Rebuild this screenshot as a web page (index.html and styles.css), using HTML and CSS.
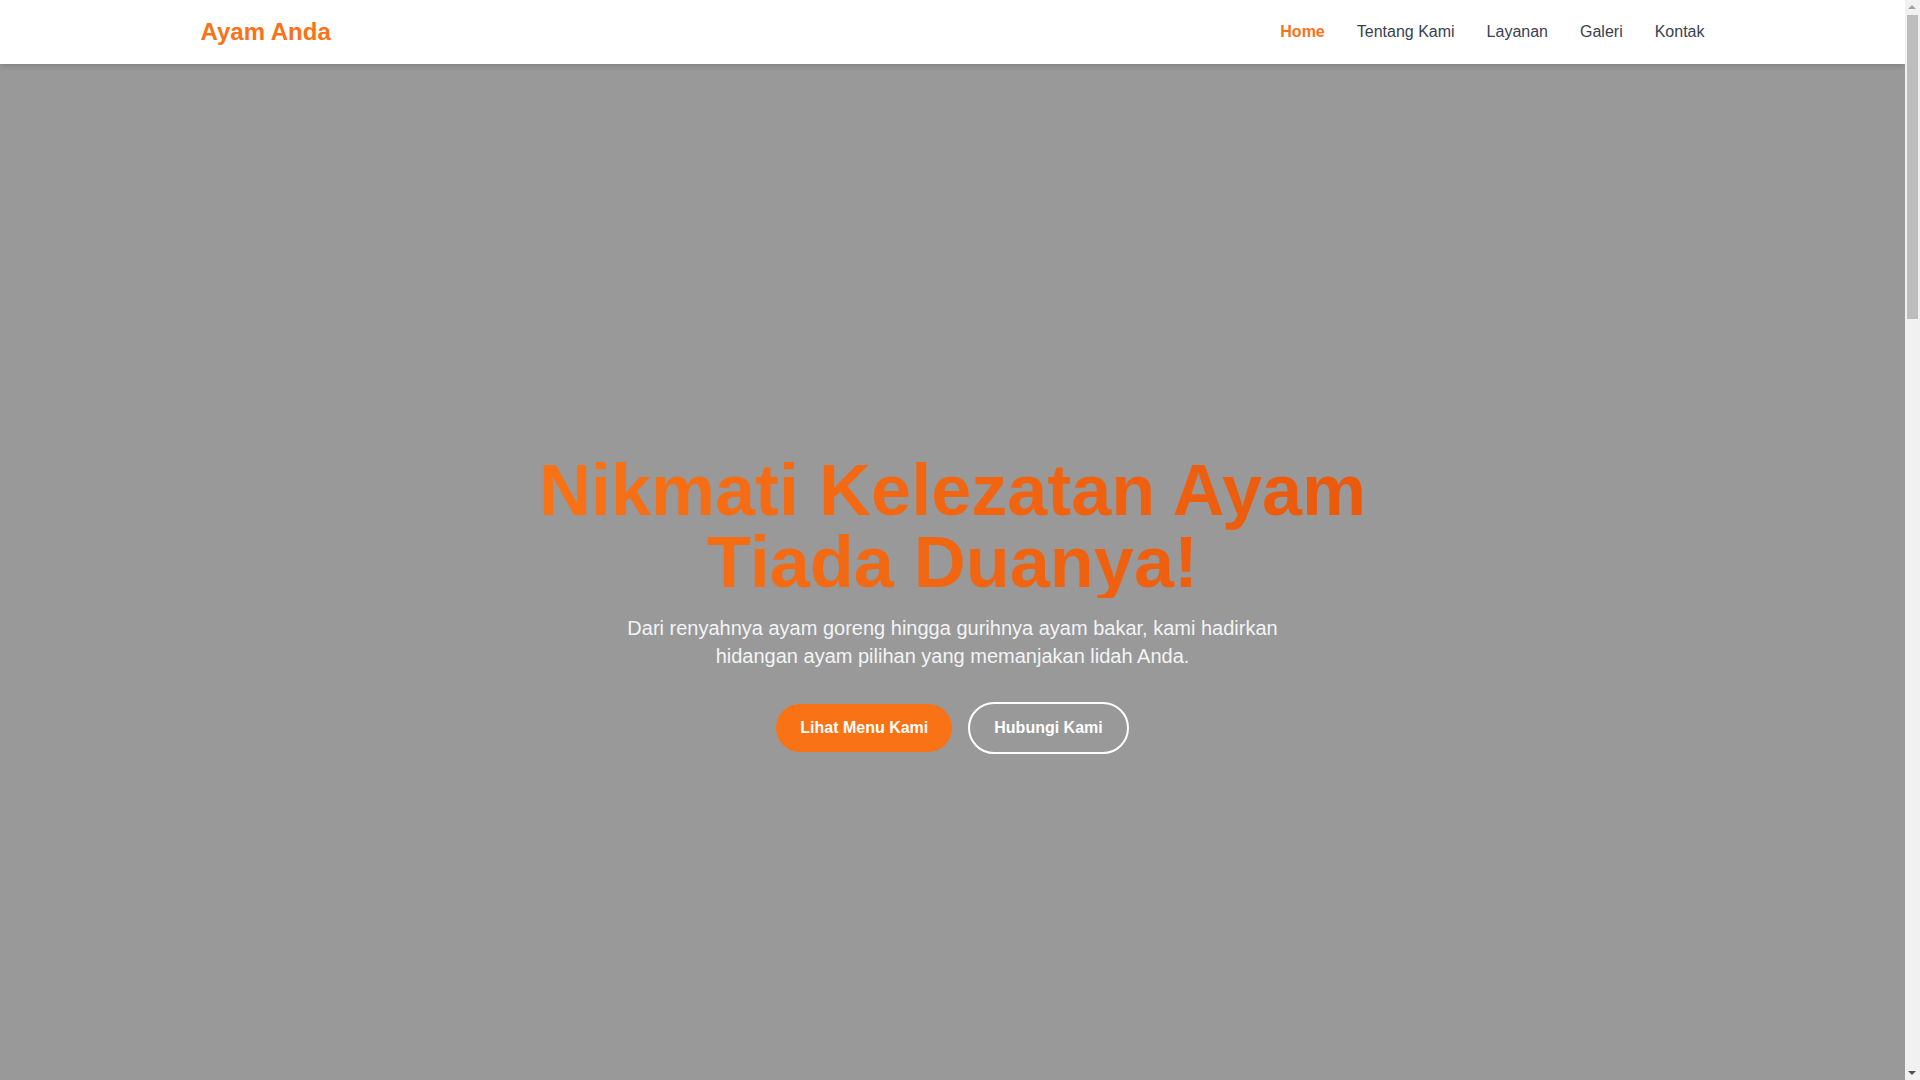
FILE: index.html
```html
<!DOCTYPE html>
<html lang="id">
<head>
<meta charset="utf-8">
<title>Ayam Anda</title>
<link rel="stylesheet" href="styles.css">
</head>
<body>
<div class="page">
<header class="site-header">
  <div class="container header-inner">
    <a class="logo" href="#">Ayam Anda</a>
    <nav class="nav">
      <a class="nav-link active" href="#">Home</a>
      <a class="nav-link" href="#tentang">Tentang Kami</a>
      <a class="nav-link" href="#layanan">Layanan</a>
      <a class="nav-link" href="#galeri">Galeri</a>
      <a class="nav-link" href="#kontak">Kontak</a>
    </nav>
  </div>
</header>

<section class="hero">
  <div class="hero-content">
    <h1 class="hero-title">Nikmati Kelezatan Ayam Tiada Duanya!</h1>
    <p class="hero-text">Dari renyahnya ayam goreng hingga gurihnya ayam bakar, kami hadirkan hidangan ayam pilihan yang memanjakan lidah Anda.</p>
    <div class="hero-actions">
      <a class="btn btn-primary" href="#layanan">Lihat Menu Kami</a>
      <a class="btn btn-outline" href="#kontak">Hubungi Kami</a>
    </div>
  </div>
</section>

<section class="section" id="tentang">
  <div class="container">
    <h2 class="section-title">Tentang Kami</h2>
    <p class="section-text">Ayam Anda menyajikan olahan ayam terbaik dengan bumbu rahasia turun-temurun.</p>
  </div>
</section>
<section class="section alt" id="layanan">
  <div class="container">
    <h2 class="section-title">Layanan</h2>
    <p class="section-text">Makan di tempat, bawa pulang, pesan antar, dan katering untuk acara Anda.</p>
  </div>
</section>
<section class="section" id="galeri">
  <div class="container">
    <h2 class="section-title">Galeri</h2>
    <p class="section-text">Lihat hidangan favorit pelanggan kami.</p>
  </div>
</section>
<section class="section alt" id="kontak">
  <div class="container">
    <h2 class="section-title">Kontak</h2>
    <p class="section-text">Hubungi kami untuk pemesanan dan informasi lebih lanjut.</p>
  </div>
</section>
<footer class="footer">
  <div class="container">© Ayam Anda</div>
</footer>
</div>

<div class="fake-scrollbar" aria-hidden="true">
  <span class="sb-arrow sb-up"></span>
  <span class="sb-thumb"></span>
  <span class="sb-arrow sb-down"></span>
</div>
</body>
</html>
```

FILE: styles.css
```css
* { box-sizing: border-box; }
html, body { margin: 0; padding: 0; }
html { scrollbar-width: none; }
body {
  font-family: "Liberation Sans", Arial, sans-serif;
  color: #374151;
  background: #ffffff;
  padding-right: 15px;
}
a { text-decoration: none; }

.container {
  max-width: 1536px;
  margin: 0 auto;
  padding: 0 16px;
}

.site-header {
  position: sticky;
  top: 0;
  z-index: 10;
  background: #ffffff;
  box-shadow: 0 4px 6px -1px rgba(0,0,0,0.1), 0 2px 4px -2px rgba(0,0,0,0.1);
}
.header-inner {
  display: flex;
  align-items: center;
  justify-content: space-between;
  padding-top: 16px;
  padding-bottom: 16px;
}
.logo {
  font-size: 24px;
  line-height: 32px;
  font-weight: 700;
  color: #f97316;
}
.nav {
  display: flex;
  gap: 32px;
}
.nav-link {
  font-size: 16px;
  line-height: 24px;
  color: #374151;
}
.nav-link.active {
  color: #f97316;
  font-weight: 700;
}

.hero {
  height: 100vh;
  background: #999999;
  display: flex;
  align-items: center;
  justify-content: center;
  text-align: center;
}
.hero-content {
  padding: 0 16px;
}
.hero-title {
  max-width: 896px;
  margin: 0 auto 16px;
  font-size: 72px;
  line-height: 1;
  font-weight: 700;
  background: linear-gradient(to right, #f97316, #ea580c);
  -webkit-background-clip: text;
  background-clip: text;
  color: transparent;
}
.hero-text {
  max-width: 672px;
  margin: 0 auto 32px;
  font-size: 20px;
  line-height: 28px;
  color: #f3f4f6;
}
.hero-actions {
  display: flex;
  justify-content: center;
  align-items: center;
  gap: 16px;
}
.btn {
  display: inline-block;
  font-size: 16px;
  line-height: 24px;
  font-weight: 700;
  padding: 12px 24px;
  border-radius: 9999px;
  color: #ffffff;
}
.btn-primary {
  background: #f97316;
}
.btn-outline {
  border: 2px solid #ffffff;
}

.section {
  min-height: 600px;
  padding: 80px 0;
}
.section.alt { background: #f9fafb; }
.section-title {
  margin: 0 0 16px;
  font-size: 36px;
  text-align: center;
  color: #1f2937;
}
.section-text {
  margin: 0;
  text-align: center;
  font-size: 18px;
  color: #4b5563;
}
.footer {
  background: #1f2937;
  color: #d1d5db;
  padding: 60px 0;
  text-align: center;
}

/* drawn scrollbar, as in the reference capture */
.fake-scrollbar {
  position: fixed;
  top: 0;
  right: 0;
  width: 15px;
  height: 100vh;
  background: #f1f1f1;
  z-index: 20;
}
.sb-thumb {
  position: absolute;
  left: 2px;
  width: 11px;
  top: 15px;
  height: 304px;
  background: #bdbdbd;
}
.sb-arrow {
  position: absolute;
  left: 3px;
  width: 0;
  height: 0;
  border-left: 4px solid transparent;
  border-right: 4px solid transparent;
}
.sb-up {
  top: 5px;
  border-bottom: 4px solid #a3a3a3;
}
.sb-down {
  bottom: 5px;
  border-top: 4px solid #505050;
}
```
